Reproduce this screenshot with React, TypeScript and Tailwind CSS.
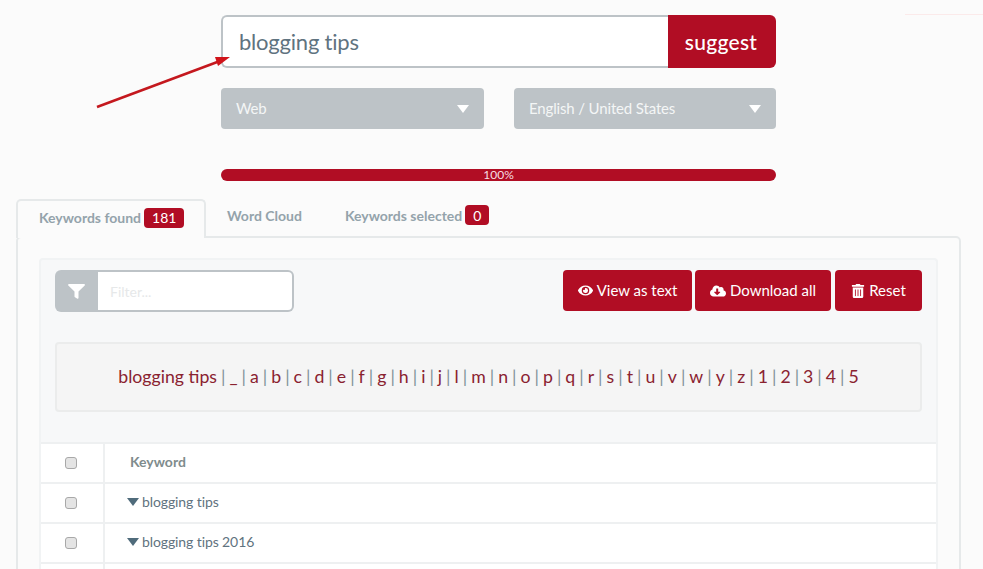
import React from "react";
import { FaEye, FaCloudDownloadAlt, FaTrashAlt } from "react-icons/fa";

const letters = ["_", "a", "b", "c", "d", "e", "f", "g", "h", "i", "j", "l", "m", "n", "o", "p", "q", "r", "s", "t", "u", "v", "w", "y", "z", "1", "2", "3", "4", "5"];

const Select = ({ label, width }: { label: string; width: string }) => (
  <div className={`${width} h-[41px] bg-[#bdc3c7] rounded-[4px] flex items-center justify-between pl-[15px] pr-[15px] text-[15px] tracking-[-0.15px] text-[#f4f6f6]`}>
    <span>{label}</span>
    <span className="w-0 h-0 border-l-[6px] border-r-[6px] border-t-[8px] border-l-transparent border-r-transparent border-t-white" />
  </div>
);

const Badge = ({ value }: { value: string }) => (
  <span className="inline-flex items-center justify-center h-5 px-[8px] ml-[3px] rounded-[4px] bg-[#b10d24] text-white text-[14px] font-normal">
    {value}
  </span>
);

const ActionButton = ({ icon, label, width }: { icon: React.ReactNode; label: string; width: string }) => (
  <button type="button" className={`${width} h-[41px] bg-[#b10d24] rounded-[4px] text-white text-[15px] flex items-center justify-center gap-[4px]`}>
    {icon}
    {label}
  </button>
);

const Row = ({ label, head }: { label: string; head?: boolean }) => (
  <div className="flex h-10 border-b-2 border-[#eef0f1] bg-white">
    <div className="w-[64px] pr-[2px] flex items-center justify-center border-r-2 border-[#eef0f1]">
      <span className="w-[12px] h-[12px] rounded-[3px] border border-[#a8a8a8] bg-[#e4e4e4]" />
    </div>
    {head ? (
      <div className="pl-[25px] pb-[4px] flex items-center text-[14px] font-bold text-[#7f8c8d]">{label}</div>
    ) : (
      <div className="pl-[22px] pb-[3px] flex items-center text-[14px] tracking-[-0.1px] text-[#5f7380]">
        <span className="w-0 h-0 mr-[3px] border-l-[6px] border-r-[6px] border-t-[8px] border-l-transparent border-r-transparent border-t-[#4f6b7b]" />
        {label}
      </div>
    )}
  </div>
);

export default function App() {
  return (
    <div className="relative w-[983px] h-[569px] overflow-hidden bg-[#fbfbfb] font-['Lato','Open_Sans',sans-serif]">
      {/* annotation arrow drawn on the screenshot */}
      <svg className="absolute left-0 top-0 pointer-events-none z-10" width="240" height="120" viewBox="0 0 240 120">
        <line x1="97" y1="107" x2="220" y2="61" stroke="#c4181e" strokeWidth="2.5" />
        <polygon points="230,57 215,57 218,66" fill="#d0131a" />
      </svg>
      <div className="absolute left-[905px] top-[14px] w-[78px] h-px bg-[#fbeaea]" />

      <div className="ml-[221px] w-[555px] pt-[15px]">
        <div className="flex h-[53px]">
          <div className="flex-1 bg-white border-2 border-r-0 border-[#bdc3c7] rounded-l-[6px] flex items-center pl-[16px] text-[22px] tracking-[-0.2px] text-[#5f7380]">
            blogging tips
          </div>
          <button type="button" className="w-[108px] pr-[2px] bg-[#b10d24] rounded-r-[6px] text-white text-[21px] font-medium tracking-[0.3px]">
            suggest
          </button>
        </div>
        <div className="flex justify-between mt-5">
          <Select label="Web" width="w-[263px]" />
          <Select label="English / United States" width="w-[262px]" />
        </div>
        <div className="mt-10 h-3 rounded-full bg-[#b10d24] flex items-center justify-center text-[12px] leading-3 text-[#f6dfe2]">
          100%
        </div>
      </div>

      <div className="flex mt-[18px] ml-4 relative z-[1] h-[39px]">
        <div className="w-[190px] h-[39px] pb-[4px] bg-[#fbfbfb] border-2 border-b-0 border-[#e6e9ea] rounded-t-[5px] flex items-center pl-[21px] text-[14px] font-bold text-[#94a3ab]">
          Keywords found
          <Badge value="181" />
        </div>
        <div className="ml-[21px] h-[32px] flex items-center text-[14px] font-bold text-[#94a3ab]">Word Cloud</div>
        <div className="ml-[43px] h-[32px] flex items-center text-[14px] font-bold text-[#94a3ab]">
          Keywords selected
          <Badge value="0" />
        </div>
      </div>

      <div className="-mt-[2px] ml-4 w-[945px] h-[340px] border-2 border-[#e6e9ea] rounded-[5px] pt-5 px-[21px]">
        <div className="h-[320px] bg-[#f7f8f9] border-2 border-b-0 border-[#f1f3f4] rounded-t-[4px]">
          <div className="flex justify-between pt-[10px] pl-[14px] pr-[14px]">
            <div className="flex w-[239px] h-[42px]">
              <div className="w-[43px] bg-[#bdc3c7] rounded-l-[6px] flex items-center justify-center text-white">
                <svg width="17" height="15" viewBox="0 0 17 15" fill="currentColor">
                  <path d="M1 0h15c.8 0 1.2.9.7 1.5L10.5 7.5V14c0 .6-.6 1-1.1.7L7 13.2c-.3-.2-.5-.5-.5-.8V7.500L.3 1.500C-.2.900.200 0 1 0z" />
                </svg>
              </div>
              <div className="flex-1 bg-white border-2 border-l-0 border-[#bdc3c7] rounded-r-[6px] flex items-center pl-[12px] text-[14px] text-[#e6e8e9]">
                Filter...
              </div>
            </div>
            <div className="flex">
              <ActionButton icon={<FaEye size={15} />} label="View as text" width="w-[129px]" />
              <div className="w-[3px]" />
              <ActionButton icon={<FaCloudDownloadAlt size={16} />} label="Download all" width="w-[136px]" />
              <div className="w-[4px]" />
              <ActionButton icon={<FaTrashAlt size={14} />} label="Reset" width="w-[87px]" />
            </div>
          </div>
          <div className="mx-[14px] mt-[30px] h-[70px] bg-[#f5f5f5] border-2 border-[#ebecec] rounded-[4px] flex items-center justify-center text-[17.7px] text-[#8a2230]">
            <span>blogging tips</span>
            {letters.map((l) => (
              <React.Fragment key={l}>
                <span className="text-[#7f9299] mx-[4px]">|</span>
                <span>{l}</span>
              </React.Fragment>
            ))}
          </div>
          <div className="mt-[30px] border-t-2 border-[#eef0f1]">
            <Row label="Keyword" head />
            <Row label="blogging tips" />
            <Row label="blogging tips 2016" />
            <Row label="" />
          </div>
        </div>
      </div>
    </div>
  );
}
